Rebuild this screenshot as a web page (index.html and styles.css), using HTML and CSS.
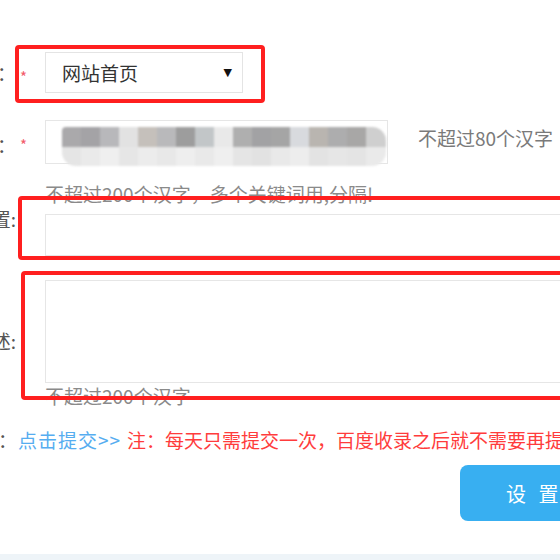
FILE: index.html
```html
<!DOCTYPE html>
<html lang="zh-CN">
<head>
<meta charset="utf-8">
<title>网站设置</title>
<link rel="stylesheet" href="styles.css">
</head>
<body>
<div class="page">
  <div class="row row-type">
    <div class="label"><span>页面类型：</span></div>
    <div class="star">*</div>
    <div class="field">
      <div class="select"><span>网站首页</span><span class="caret">▼</span></div>
      <div class="mark mark-type"></div>
    </div>
  </div>

  <div class="row row-title">
    <div class="label"><span>网页标题：</span></div>
    <div class="star">*</div>
    <div class="field field-inline">
      <div class="input input-title">
        <div class="mosaic"><div class="mosaic-top"></div><div class="mosaic-bottom"></div></div>
      </div>
      <span class="tip">不超过80个汉字</span>
    </div>
  </div>

  <div class="row row-keywords">
    <div class="label label-keywords"><span>关键词设置:</span></div>
    <div class="star"></div>
    <div class="field">
      <div class="hint">不超过200个汉字，多个关键词用,分隔!</div>
      <div class="input input-wide"></div>
      <div class="mark mark-keywords"></div>
    </div>
  </div>

  <div class="row row-desc">
    <div class="label label-desc"><span>网站描述:</span></div>
    <div class="star"></div>
    <div class="field">
      <div class="textarea"></div>
      <div class="hint hint-after">不超过200个汉字</div>
      <div class="mark mark-desc"></div>
    </div>
  </div>

  <div class="submit-line">
    <div class="label label-short"><span>主动推送：</span></div>
    <a class="link">点击提交&gt;&gt;</a>
    <span class="notice">注：每天只需提交一次，百度收录之后就不需要再提交了</span>
  </div>

  <div class="actions">
    <button class="btn">设 置</button>
  </div>

  <div class="footer-strip"></div>
</div>
</body>
</html>
```

FILE: styles.css
```css
html, body {
  margin: 0;
  padding: 0;
  background: #ffffff;
  overflow: hidden;
}

body {
  width: 560px;
  height: 560px;
  font-family: "Noto Sans CJK SC", "Noto Sans", sans-serif;
  font-size: 19px;
  color: #333;
}

.page {
  padding-top: 52px;
  width: 560px;
}

.row {
  display: flex;
  align-items: flex-start;
}

.label {
  width: 16px;
  flex: none;
  display: flex;
  justify-content: flex-end;
  overflow: hidden;
  white-space: nowrap;
  color: #555;
  line-height: 22px;
}

.star {
  width: 29px;
  flex: none;
  color: #f25a6a;
  font-size: 15px;
  line-height: 15px;
  padding-left: 4px;
  box-sizing: border-box;
}

.field {
  position: relative;
  flex: none;
  width: 600px;
}

/* row 1 */
.row-type .label { margin-top: 10px; }
.row-type .star { margin-top: 17px; }

.select {
  width: 198px;
  height: 41px;
  box-sizing: border-box;
  border: 1px solid #e4e4e4;
  display: flex;
  align-items: center;
  justify-content: space-between;
  padding: 0 10px 0 16px;
  background: #fff;
  color: #333;
}

.caret {
  font-family: "DejaVu Sans", sans-serif;
  font-size: 11px;
  color: #111;
}

.mark {
  position: absolute;
  border: 4px solid #ff1f1f;
  border-radius: 4px;
  box-sizing: border-box;
  z-index: 2;
}

.mark-type {
  left: -30px;
  top: -7px;
  width: 250px;
  height: 58px;
}

/* row 2 */
.row-title { margin-top: 27px; }
.row-title .label { margin-top: 14px; }
.row-title .star { margin-top: 17px; }

.field-inline {
  display: flex;
  align-items: flex-start;
}

.input {
  box-sizing: border-box;
  border: 1px solid #e6e6e6;
  background: #fff;
}

.input-title {
  width: 343px;
  height: 44px;
  position: relative;
}

.mosaic {
  position: absolute;
  left: 16px;
  top: 6px;
  width: 324px;
  height: 39px;
  border-radius: 4px 14px 14px 14px;
  overflow: hidden;
  filter: blur(1px);
}

.mosaic-top {
  height: 20px;
  background: linear-gradient(to right,
    #aaa9ab 0 19px, #a4a3a6 19px 38px, #b8b8bb 38px 57px, #e2e2e2 57px 76px,
    #c5c0bb 76px 95px, #b9b9bb 95px 114px, #9d9d9d 114px 133px, #c2c6c8 133px 152px,
    #e9e9e9 152px 171px, #afafaf 171px 190px, #a2a2a4 190px 209px, #a5a5a5 209px 228px,
    #d8dade 228px 247px, #b9b5b0 247px 266px, #adadae 266px 285px, #a8a7a6 285px 304px,
    #cfcfcf 304px 324px);
}

.mosaic-bottom {
  height: 19px;
  background: linear-gradient(to right,
    #e5e5e5 0 19px, #eaeaea 19px 38px, #efefef 38px 57px, #e6e6e6 57px 76px,
    #ececec 76px 95px, #e8e8e8 95px 114px, #eeeeee 114px 133px, #e9e9e9 133px 152px,
    #efefef 152px 171px, #e5e5e5 171px 190px, #e2e2e2 190px 209px, #e9e9e9 209px 228px,
    #ededed 228px 247px, #e3e3e3 247px 266px, #e6e6e6 266px 285px, #e4e4e4 285px 304px,
    #eaeaea 304px 324px);
}

.tip {
  margin-left: 30px;
  margin-top: 7px;
  line-height: 22px;
  color: #7a7a7a;
  white-space: nowrap;
}

/* row 3 */
.row-keywords { margin-top: 19px; }
.label-keywords { margin-top: 25px; }

.hint {
  line-height: 22px;
  color: #8a8a8a;
  white-space: nowrap;
}

.input-wide {
  margin-top: 9px;
  width: 560px;
  height: 42px;
}

.mark-keywords {
  left: -27px;
  top: 13px;
  width: 620px;
  height: 64px;
}

/* row 4 */
.row-desc { margin-top: 24px; }
.label-desc { margin-top: 50px; }

.textarea {
  width: 560px;
  height: 103px;
  box-sizing: border-box;
  border: 1px solid #e6e6e6;
  background: #fff;
}

.hint-after {
  margin-top: 2px;
}

.mark-desc {
  left: -24px;
  top: -9px;
  width: 620px;
  height: 129px;
}

/* submit line */
.submit-line {
  margin-top: 22px;
  display: flex;
  align-items: center;
  line-height: 22px;
  white-space: nowrap;
}

.label-short {
  width: 17px;
}

.link {
  color: #56adf0;
  margin-left: 1px;
  letter-spacing: 1px;
}

.notice {
  color: #ff3c3c;
  margin-left: 6px;
}

/* actions */
.actions {
  margin-top: 14px;
  padding-left: 460px;
  height: 56px;
}

.btn {
  width: 160px;
  height: 56px;
  border: none;
  border-radius: 8px;
  background: #38aff1;
  color: #fff;
  font-family: "Noto Sans CJK SC", sans-serif;
  font-size: 20px;
  text-align: left;
  padding: 0 0 0 46px;
  letter-spacing: 4px;
}

.footer-strip {
  margin-top: 33px;
  height: 10px;
  background: #eef4f8;
}
```
